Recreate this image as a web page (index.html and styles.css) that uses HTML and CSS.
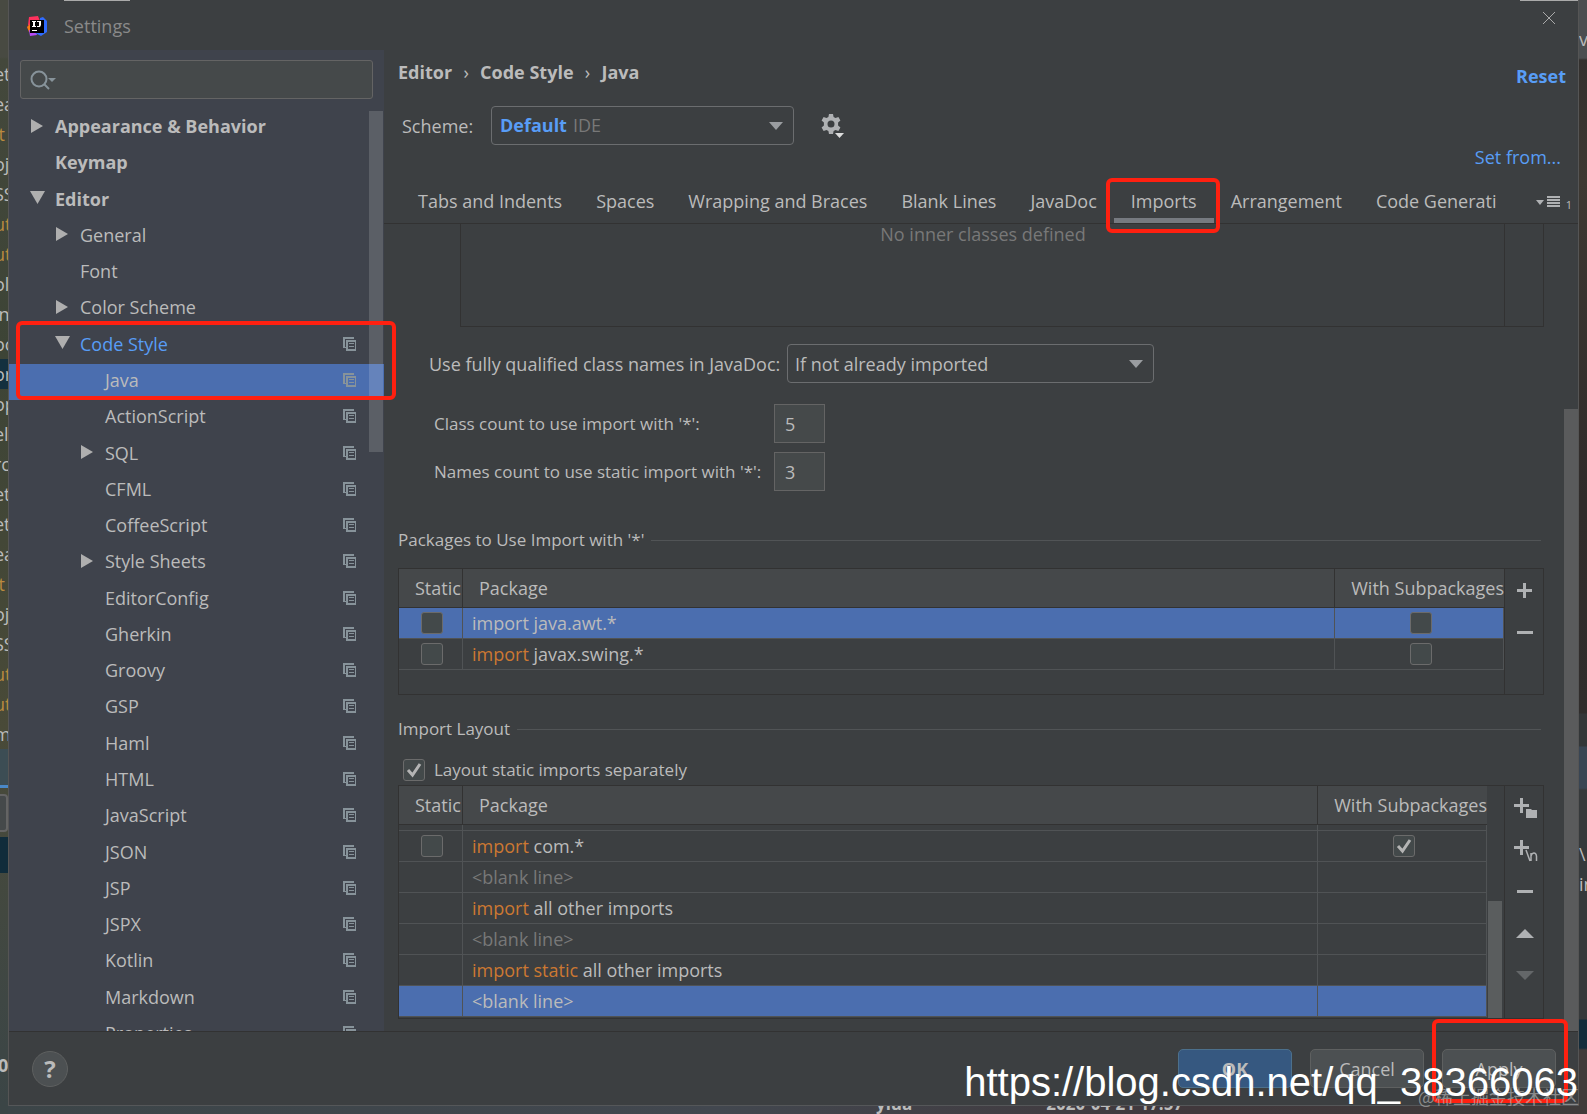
FILE: index.html
```html
<!DOCTYPE html>
<html lang="en">
<head>
	<meta charset="UTF-8">
	<meta name="viewport" content="width=device-width, initial-scale=1.0">
	<title>Settings</title>
	<link rel="stylesheet" href="styles.css">
</head>
<body>
<!-- shared icons -->
<svg class="defs" width="0" height="0">
	<symbol id="right" viewBox="0 0 15 15"><path d="M1 0v14l12-7z"/></symbol>
	<symbol id="down" viewBox="0 0 15 15"><path d="M0 0h15L7.5 13z"/></symbol>
	<symbol id="copy" viewBox="0 0 13 14"><path fill-rule="evenodd" d="M0 0h11v2H2v8h1v1H0zM3 3h10v11H3zM5 5v7h7V5zM6 6h5v1H6zM6 9h5v1H6z"/></symbol>
	<symbol id="drop" viewBox="0 0 14 8"><path d="M0 0h14L7 8z"/></symbol>
	<symbol id="plus" viewBox="0 0 26 26"><path d="M11 5h3v6h6v3h-6v6h-3v-6H5v-3h6z"/></symbol>
	<symbol id="minus" viewBox="0 0 26 26"><path d="M5 11h16v3H5z"/></symbol>
</svg>
<div class="screen">
	<div class="behind left">
		<ul class="code">
			<li>et</li><li>ea</li><li class="tag">it</li><li>oj</li><li>SS</li><li class="tag">ut</li><li class="tag">ut</li><li>ol</li>
			<li>in</li><li>oc</li><li class="cur">or</li><li>op</li><li>el</li><li>rc</li><li>et</li><li>et</li>
			<li>ea</li><li class="tag">it</li><li>oj</li><li>SS</li><li class="tag">ut</li><li class="tag">ut</li><li>m</li>
		</ul>
		<div class="tool"></div>
		<div class="field"></div>
		<div class="row"></div>
		<b class="zero">0</b>
	</div>

	<div class="dialog">
		<header class="titlebar">
			<svg class="logo" viewBox="0 0 20 20">
				<path fill="#fe315d" d="M2 1l9-1 2 5-8 8-4-4z"/>
				<path fill="#f97a12" d="M0 11l4-4 2 8-4 1z"/>
				<path fill="#b74af7" d="M2 14l6 0 2 5-7 1z"/>
				<path fill="#2f6bff" d="M13 2l3-1 4 4v11l-6 4-6-3 5-6z"/>
				<path fill="#000" d="M3 4h14v13H3z"/>
				<path fill="#fff" d="M5 5h4v1H8v4h1v1H5v-1h1V6H5zM10 5h4v4l-1 2h-3v-1h2V6h-2zM5 14h5v1H5z"/>
			</svg>
			<h1>Settings</h1>
			<button class="close" aria-label="Close"><svg viewBox="0 0 12 12"><path d="M0 0l12 12M12 0L0 12"/></svg></button>
		</header>

		<div class="body">
			<nav class="sidebar">
				<div class="search">
					<svg viewBox="0 0 26 20"><circle cx="9" cy="9" r="7.5"/><path class="handle" d="M14 14l5 5"/><path class="caret" d="M18 8h8l-4 4z"/></svg>
					<input type="text" aria-label="Search settings">
				</div>
				<div class="treewrap">
					<div class="tree">
						<a href="#" class="l1"><svg><use href="#right"/></svg><span>Appearance &amp; Behavior</span></a>
						<a href="#" class="l1"><span>Keymap</span></a>
						<a href="#" class="l1"><svg><use href="#down"/></svg><span>Editor</span></a>
						<a href="#" class="l2"><svg><use href="#right"/></svg><span>General</span></a>
						<a href="#" class="l2"><span>Font</span></a>
						<a href="#" class="l2"><svg><use href="#right"/></svg><span>Color Scheme</span></a>
						<a href="#" class="l2 changed"><svg><use href="#down"/></svg><span>Code Style</span><svg class="copy"><use href="#copy"/></svg></a>
						<a href="#" class="l3 selected"><span>Java</span><svg class="copy"><use href="#copy"/></svg></a>
						<a href="#" class="l3"><span>ActionScript</span><svg class="copy"><use href="#copy"/></svg></a>
						<a href="#" class="l3"><svg><use href="#right"/></svg><span>SQL</span><svg class="copy"><use href="#copy"/></svg></a>
						<a href="#" class="l3"><span>CFML</span><svg class="copy"><use href="#copy"/></svg></a>
						<a href="#" class="l3"><span>CoffeeScript</span><svg class="copy"><use href="#copy"/></svg></a>
						<a href="#" class="l3"><svg><use href="#right"/></svg><span>Style Sheets</span><svg class="copy"><use href="#copy"/></svg></a>
						<a href="#" class="l3"><span>EditorConfig</span><svg class="copy"><use href="#copy"/></svg></a>
						<a href="#" class="l3"><span>Gherkin</span><svg class="copy"><use href="#copy"/></svg></a>
						<a href="#" class="l3"><span>Groovy</span><svg class="copy"><use href="#copy"/></svg></a>
						<a href="#" class="l3"><span>GSP</span><svg class="copy"><use href="#copy"/></svg></a>
						<a href="#" class="l3"><span>Haml</span><svg class="copy"><use href="#copy"/></svg></a>
						<a href="#" class="l3"><span>HTML</span><svg class="copy"><use href="#copy"/></svg></a>
						<a href="#" class="l3"><span>JavaScript</span><svg class="copy"><use href="#copy"/></svg></a>
						<a href="#" class="l3"><span>JSON</span><svg class="copy"><use href="#copy"/></svg></a>
						<a href="#" class="l3"><span>JSP</span><svg class="copy"><use href="#copy"/></svg></a>
						<a href="#" class="l3"><span>JSPX</span><svg class="copy"><use href="#copy"/></svg></a>
						<a href="#" class="l3"><span>Kotlin</span><svg class="copy"><use href="#copy"/></svg></a>
						<a href="#" class="l3"><span>Markdown</span><svg class="copy"><use href="#copy"/></svg></a>
						<a href="#" class="l3"><span>Properties</span><svg class="copy"><use href="#copy"/></svg></a>
					</div>
					<div class="thumb"></div>
				</div>
				<div class="mark mark-tree"></div>
			</nav>

			<main class="content">
				<div class="crumbs">
					<b>Editor</b><i>›</i><b>Code Style</b><i>›</i><b>Java</b>
					<a href="#" class="reset">Reset</a>
				</div>
				<div class="scheme">
					<label for="scheme">Scheme:</label>
					<div class="combo">
						<select id="scheme"><option>Default</option></select>
						<span>IDE</span>
						<svg><use href="#drop"/></svg>
					</div>
					<button class="gear" aria-label="Scheme actions">
						<svg viewBox="0 0 24 24"><path fill-rule="evenodd" d="M8 0h4l.6 3 1.9 1.100 2.900-1 2 3.500-2.300 2v2.800l2.300 2-2 3.500-2.900-1L12.600 17 12 20H8l-.6-3-1.900-1.100-2.900 1-2-3.500 2.300-2V8.600l-2.300-2 2-3.500 2.900 1L7.400 3zM10 6.500a3.500 3.500 0 1 0 0 7 3.500 3.500 0 0 0 0-7z"/><path class="tip" d="M14 19h9l-4.500 5z"/></svg>
					</button>
				</div>
				<div class="setfrom"><a href="#">Set from...</a></div>
				<div class="tabs">
					<button>Tabs and Indents</button>
					<button>Spaces</button>
					<button>Wrapping and Braces</button>
					<button>Blank Lines</button>
					<button>JavaDoc</button>
					<button class="on">Imports<span class="mark mark-tab"></span></button>
					<button>Arrangement</button>
					<button class="cut">Code Generation</button>
					<button class="more" aria-label="Show hidden tabs"><svg viewBox="0 0 24 14"><path d="M0 5h8l-4 5zM11 1h13v2H11zM11 4h13v2H11zM11 7h13v2H11zM11 10h13v2H11z"/></svg><small>1</small></button>
				</div>

				<div class="pane">
					<div class="form">
						<div class="inner"><p>No inner classes defined</p></div>
						<div class="line javadoc">
							<label for="names">Use fully qualified class names in JavaDoc:</label>
							<div class="combo">
								<select id="names"><option>If not already imported</option></select>
								<svg><use href="#drop"/></svg>
							</div>
						</div>
						<div class="line count">
							<label for="classes">Class count to use import with '*':</label>
							<input type="text" id="classes" value="5">
						</div>
						<div class="line count">
							<label for="statics">Names count to use static import with '*':</label>
							<input type="text" id="statics" value="3">
						</div>

						<h2>Packages to Use Import with '*'</h2>
						<div class="panel packages">
							<table>
								<thead><tr><th class="c1">Static</th><th>Package</th><th class="c3">With Subpackages</th></tr></thead>
								<tbody>
									<tr class="selected"><td><input type="checkbox" aria-label="Static"></td><td>import java.awt.*</td><td><input type="checkbox" aria-label="With subpackages"></td></tr>
									<tr><td><input type="checkbox" aria-label="Static"></td><td><em>import</em> javax.swing.*</td><td><input type="checkbox" aria-label="With subpackages"></td></tr>
								</tbody>
							</table>
							<div class="tools">
								<button aria-label="Add"><svg><use href="#plus"/></svg></button>
								<button aria-label="Remove"><svg><use href="#minus"/></svg></button>
							</div>
						</div>

						<h2 class="second">Import Layout</h2>
						<div class="check">
							<input type="checkbox" id="separately" checked>
							<label for="separately">Layout static imports separately</label>
						</div>
						<div class="panel layout">
							<table>
								<thead><tr><th class="c1">Static</th><th>Package</th><th class="c3">With Subpackages</th></tr></thead>
								<tbody>
									<tr class="sliver"><td></td><td></td><td></td></tr>
									<tr><td><input type="checkbox" aria-label="Static"></td><td><em>import</em> com.*</td><td><input type="checkbox" aria-label="With subpackages" checked></td></tr>
									<tr class="blank"><td></td><td>&lt;blank line&gt;</td><td></td></tr>
									<tr><td></td><td><em>import</em> all other imports</td><td></td></tr>
									<tr class="blank"><td></td><td>&lt;blank line&gt;</td><td></td></tr>
									<tr><td></td><td><em>import static</em> all other imports</td><td></td></tr>
									<tr class="selected blank"><td></td><td>&lt;blank line&gt;</td><td></td></tr>
								</tbody>
							</table>
							<div class="bar"></div>
							<div class="tools">
								<button aria-label="Add package"><svg viewBox="0 0 26 26"><path d="M8 3h3v6h6v3h-6v6H8v-6H2V9h6zM14 14h5l1 1h5v8H14z"/></svg></button>
								<button aria-label="Add blank line"><svg viewBox="0 0 26 26"><path d="M8 3h3v6h6v3h-6v6H8v-6H2V9h6z"/><path class="nl" d="M14 13l4 11M19 24v-8M19 19q1-3 3-3t2.500 3v5"/></svg></button>
								<button aria-label="Remove"><svg><use href="#minus"/></svg></button>
								<button aria-label="Move up"><svg viewBox="0 0 26 26"><path d="M4 17h18l-9-9z"/></svg></button>
								<button aria-label="Move down" disabled><svg viewBox="0 0 26 26"><path d="M4 8h18l-9 9z"/></svg></button>
							</div>
						</div>
					</div>
					<div class="scroller"></div>
				</div>
			</main>
		</div>

		<footer class="footer">
			<button class="help" aria-label="Help">?</button>
			<button class="btn ok">OK</button>
			<button class="btn">Cancel</button>
			<button class="btn">Apply<span class="mark mark-apply"></span></button>
		</footer>
	</div>

	<div class="behind right">
		<span class="va">va</span>
		<span class="slash">\</span>
		<span class="in">in</span>
	</div>
	<div class="behind bottom">
		<b class="who">yiua</b><b class="when">2020-04-21 17:57</b>
	</div>

	<p class="community">@稀土掘金技术社区</p>
	<p class="blog">https://blog.csdn.net/qq_38366063</p>
</div>
</body>
</html>
```
FILE: styles.css
```css
*{margin:0;padding:0;box-sizing:border-box;}
body{font:18px/24px "Open Sans","Noto Sans","Noto Sans CJK SC",sans-serif;color:#bbb;background:#3c3f41;overflow:hidden;}
button,input,select{font:inherit;color:inherit;background:none;border:0;}
a{color:#589df6;text-decoration:none;}
ul{list-style:none;}
svg{display:block;fill:#afb1b3;}
.defs{position:absolute;}

.screen{position:relative;display:grid;grid-template-columns:8px 1fr 9px;grid-template-rows:1fr 8px;height:100vh;overflow:hidden;}

/* what shows round the dialog */
.behind{overflow:hidden;}
.left{background:linear-gradient(#484a42 0,#484a42 57px,#44483c 59px,#3d4436 350px,#494a38 730px,#3f4744 1000px,#3b4546 1106px);grid-row:1/3;}
.code{padding-top:59px;line-height:30px;}
.code li{height:30px;width:8px;overflow:hidden;text-indent:-6px;}
.code .tag{color:#b98a3e;}
.code .cur{background:#14303f;}
.tool{height:39px;background:#3c4d54;border-bottom:3px solid #4a88c7;}
.field{height:38px;margin:6px 0 5px;border:2px solid #646464;border-left:0;border-radius:0 4px 4px 0;background:#45494a;}
.row{height:36px;background:#102c3b;}
.zero{display:block;margin-top:180px;text-indent:-2px;}
.right{background:linear-gradient(#4b4e50 0,#4b4e50 58px,#33302e 60px,#3d3832 180px,#2f2b2a 500px,#302d2c 713px,#333638 714px,#333638 746px,#394553 747px,#394553 788px,#36393b 790px,#36393b 1019px,#132c3b 1020px,#132c3b 1048px,#403b3a 1050px);border-left:1px solid #555;}
.right span{display:block;}
.va{margin-top:27px;}
.slash{margin-top:791px;}
.in{margin-top:6px;}
.bottom{grid-column:2/4;background:linear-gradient(90deg,#3c4548,#42474f 45%,#41383c 75%,#3f3b3a);font-size:17px;line-height:12px;}
.who{margin-left:868px;}
.when{margin-left:134px;}
.bottom b{position:relative;top:-8px;}

.dialog{display:flex;flex-direction:column;min-height:0;min-width:0;background:#3c3f41;border-left:1px solid #555;border-bottom:1px solid #555759;}
.titlebar{display:flex;align-items:center;height:50px;padding:1px 23px 0 18px;background:linear-gradient(#aaa,#aaa) 55px 0/66px 1px no-repeat,linear-gradient(#aaa,#aaa) right top/58px 1px no-repeat;}
.logo{width:20px;height:20px;margin-right:17px;}
.titlebar h1{font-size:18px;font-weight:400;color:#8a8a8a;flex:1;}
.close{align-self:flex-start;padding-top:11px;}
.close svg{width:12px;height:12px;stroke:#aaa;stroke-width:1;}
.body{display:flex;flex:1;min-height:0;}

.sidebar{position:relative;display:flex;flex-direction:column;width:375px;background:#3f434c;}
.search{display:flex;align-items:center;height:39px;margin:10px 11px 11px;padding-left:9px;background:#45494a;border:1px solid #646464;border-radius:3px;}
.search svg{width:26px;height:20px;fill:none;stroke:#87939a;stroke-width:2;}
.search .caret{fill:#87939a;stroke:none;}
.search input{flex:1;min-width:0;outline:0;}
.treewrap{position:relative;flex:1;min-height:0;overflow:hidden;}
.tree{display:grid;grid-auto-rows:1fr;height:calc(100% + 22px);}
.tree a{display:flex;align-items:center;min-height:0;padding:0 28px 4px 0;color:#bbb;}
.tree a svg{width:15px;height:15px;margin-right:10px;fill:#afafaf;}
.tree a span{flex:1;}
.tree a span:first-child{margin-left:25px;}
.tree a .copy{width:13px;height:14px;margin-right:0;fill:#87939a;}
.tree .l1{padding-left:21px;font-weight:700;}
.tree .l2{padding-left:46px;}
.tree .l3{padding-left:71px;}
.tree .changed{color:#589df6;}
.tree .selected{background:#4b6eaf;}
.thumb{position:absolute;top:1px;right:1px;width:14px;height:341px;background:rgba(255,255,255,.15);}

/* red highlight frames */
.mark{position:absolute;border:4px solid #ff2010;border-radius:6px;pointer-events:none;}
.mark-tree{top:271px;left:7px;width:380px;height:79px;z-index:2;}
.mark-tab{top:-2px;right:-6px;bottom:-15px;left:-8px;}
.mark-apply{top:-31px;right:-13px;bottom:-16px;left:-11px;}

.content{display:flex;flex-direction:column;flex:1;min-width:0;}
.crumbs{display:flex;align-items:center;height:46px;padding:0 12px 2px 14px;}
.crumbs i{width:28px;text-align:center;font-style:normal;}
.crumbs .reset{margin-left:auto;padding-top:8px;font-weight:700;}
.scheme{display:flex;align-items:center;margin-top:10px;padding-left:18px;}
.scheme label{width:89px;}
.scheme .combo{width:303px;}
.scheme select{color:#589df6;font-weight:700;}
.combo{display:grid;height:39px;}
.combo>*{grid-area:1/1;}
.combo select{appearance:none;width:100%;padding:0 8px 2px;border:1px solid #6b6d6f;border-radius:4px;}
.combo span{align-self:center;margin-left:82px;padding-bottom:2px;color:#787878;pointer-events:none;}
.combo svg{width:14px;height:8px;align-self:center;justify-self:end;margin-right:11px;fill:#9a9da0;pointer-events:none;}
.gear{margin-left:27px;}
.gear svg{width:24px;height:24px;}
.gear .tip{fill:#ddd;}
.setfrom{padding-right:17px;text-align:right;}
.tabs{display:flex;height:44px;margin-top:11px;padding-left:17px;border-bottom:1px solid #323232;white-space:nowrap;}
.tabs button{position:relative;padding:0 17px 2px;flex:none;}
.tabs .on{border-bottom:5px solid #767a80;padding-top:5px;}
.tabs .cut{flex:0 1 121px;min-width:0;margin-left:17px;padding:0 0 2px;overflow:hidden;text-align:left;}
.tabs .more{display:flex;align-items:center;gap:6px;margin-left:auto;padding:0 6px 0 0;}
.more svg{width:24px;height:14px;}
.more small{font-size:11px;padding-top:6px;}

.pane{display:flex;flex:1;min-height:0;overflow:hidden;}
.form{flex:1;min-width:0;padding:0 20px 0 14px;}
.inner{height:103px;margin-left:62px;padding-right:38px;border:1px solid #323232;border-top:0;background:linear-gradient(#323232,#323232) right 38px top/1px 100% no-repeat;text-align:center;line-height:20px;color:#787878;}
.scroller{width:14px;margin-top:185px;background:#5a5b5c;}
.line{display:flex;align-items:center;}
.javadoc{margin:17px 0 21px;padding-left:31px;}
.javadoc label{width:358px;}
.javadoc .combo{width:367px;}
.javadoc select{padding:0 7px;}
.count{margin-bottom:9px;padding-left:36px;}
.count label{width:340px;font-size:17px;white-space:nowrap;}
.count input{width:51px;height:39px;padding-left:10px;background:#45494a;border:1px solid #646464;}
h2{display:flex;align-items:center;gap:7px;margin:37px 3px 16px 0;font-size:17px;font-weight:400;}
h2:after{content:"";flex:1;height:1px;background:#515456;}
h2.second{margin:22px 3px 18px 0;}
.check{display:flex;align-items:center;height:22px;margin-bottom:4px;padding-left:5px;gap:9px;font-size:17px;}

input[type=checkbox]{appearance:none;display:block;width:22px;height:22px;background:#43494a;border:1px solid #6b6b6b;border-radius:3px;}
input[type=checkbox]:checked{background:#43494a url("data:image/svg+xml,%3Csvg xmlns='http://www.w3.org/2000/svg' viewBox='0 0 20 20'%3E%3Cpath fill='none' stroke='%23b4b4b4' stroke-width='3' d='M4 10l4.500 5L16 4'/%3E%3C/svg%3E");}

.panel{display:flex;align-items:flex-start;border:1px solid #323232;}
.packages{height:127px;}
.layout{height:234px;}
.panel table{flex:1;min-width:0;table-layout:fixed;border-spacing:0;}
th{height:39px;padding-left:16px;font-weight:400;text-align:left;white-space:nowrap;background:#45484a;border-right:1px solid #323232;border-bottom:1px solid #323232;}
th:last-child{border-right:0;}
.c1{width:64px;}
.c3{width:167px;}
td{height:31px;padding-left:9px;border-right:1px solid #505355;border-bottom:1px solid #505355;}
td input[type=checkbox]{margin:0 auto;}
td:first-child,td:last-child{padding:0 0 0 3px;}
td em{font-style:normal;color:#cc7832;}
.sliver td{height:6px;}
.blank td{color:#787878;}
tr.selected td{background:#4b6eaf;color:#bbb;}
.bar{width:17px;height:117px;align-self:flex-end;border:solid transparent;border-width:0 2px 0 1px;background:#5a5d5e;background-clip:padding-box;}
.tools{display:flex;flex-direction:column;gap:16px;width:39px;align-self:stretch;padding:9px 0 0 7px;border-left:1px solid #323232;}
.tools svg{width:26px;height:26px;}
.tools .nl{fill:none;stroke:#afb1b3;stroke-width:1.500;}
.tools :disabled{opacity:.35;}

.footer{display:flex;align-items:center;gap:18px;height:74px;padding:0 22px 0 23px;border-top:1px solid #323232;}
.help{width:36px;height:36px;margin-right:auto;border:1px solid #5e6060;border-radius:50%;background:#4c5052;font-size:24px;font-weight:700;line-height:30px;}
.btn{position:relative;width:114px;height:39px;background:#4c5052;border:1px solid #5e6060;border-radius:5px;}
.ok{background:#365880;border-color:#4c708c;font-weight:700;}

.blog{position:absolute;right:9px;bottom:9px;font:40px/46px "Liberation Sans",sans-serif;color:#fff;z-index:3;}
.community{position:absolute;right:8px;bottom:6px;font-family:"Noto Sans CJK SC",sans-serif;color:rgba(190,190,190,.6);z-index:3;}
```
